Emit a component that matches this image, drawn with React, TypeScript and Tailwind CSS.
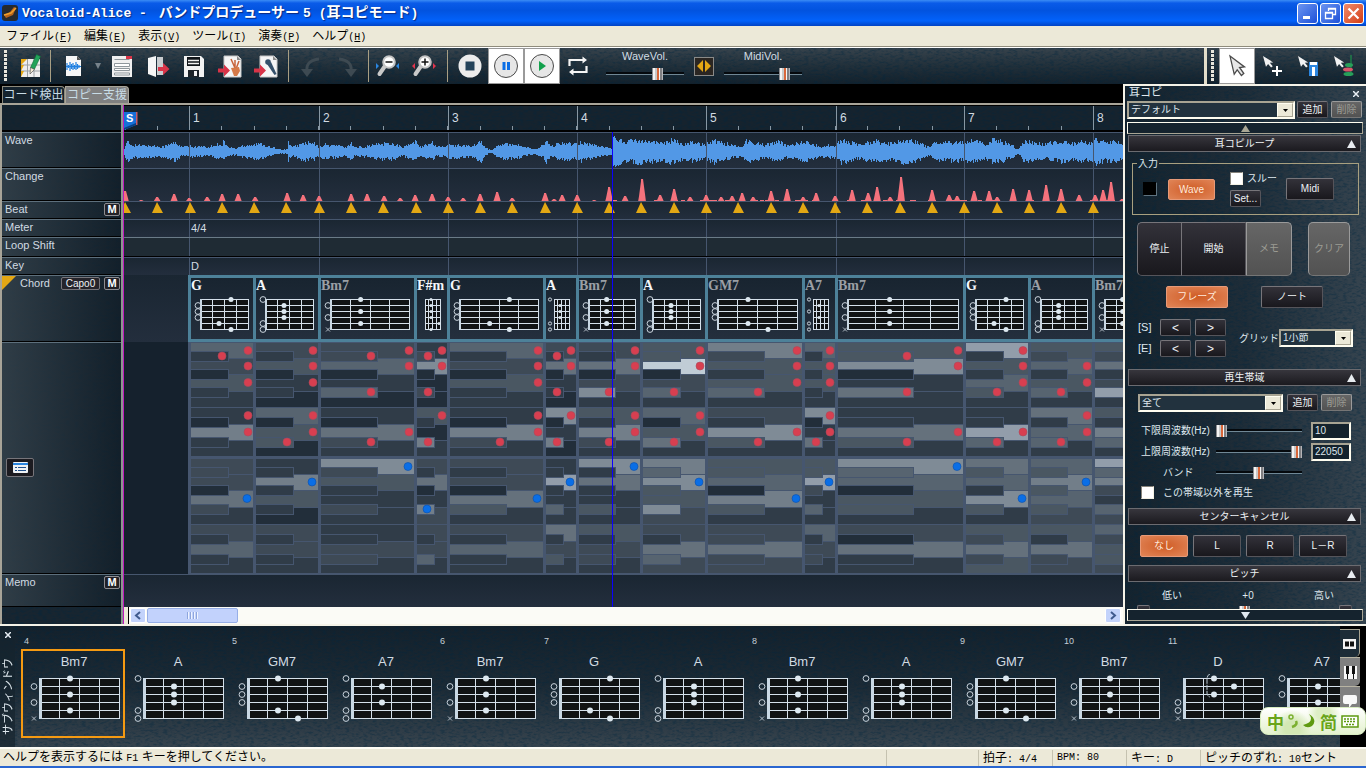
import React from "react";

const JP = "font-['Liberation_Sans','Noto_Sans_CJK_JP',sans-serif]";

/* ---------- shared data ---------- */

// one character per string, high to low: o = open, x = muted, digit = fret
const SHAPES: Record<string, string> = {
  G: "3ooo23",
  A: "o222oo",
  Bm7: "2o2o2x",
  "F#m": "222242",
  GM7: "2ooo23",
  A7: "o2o2oo",
  D: "232oox",
};

type Column = { name: string; w: number; strong?: boolean; mid: string; low: string; red: number[]; blue: number[] };
// levels run B, A#, A, G#, G, F#, F, E, D#, D, C#, C
const COLUMNS: Column[] = [
  { name: "G", w: 65, strong: true, mid: "412031110611", low: "222052121411", red: [0, 1, 2, 4, 7, 9], blue: [4] },
  { name: "A", w: 65, strong: true, mid: "213011040330", low: "116131021211", red: [0, 2, 4, 7, 9, 10], blue: [2] },
  { name: "Bm7", w: 96, mid: "224014010521", low: "723112111221", red: [0, 1, 2, 5, 9, 10], blue: [0] },
  { name: "F#m", w: 33, strong: true, mid: "127002031061", low: "215016221241", red: [0, 1, 2, 5, 7, 10], blue: [5] },
  { name: "G", w: 96, strong: true, mid: "412031110621", low: "212053121411", red: [0, 2, 4, 7, 9, 10], blue: [4] },
  { name: "A", w: 33, strong: true, mid: "215011070160", low: "118114151231", red: [0, 1, 2, 5, 7, 10], blue: [2] },
  { name: "Bm7", w: 64, mid: "215027131621", low: "715113131221", red: [0, 2, 5, 7, 9, 10], blue: [0] },
  { name: "A", w: 65, strong: true, mid: "339024140351", low: "647337221542", red: [0, 2, 5, 7, 9, 10], blue: [2] },
  { name: "GM7", w: 97, mid: "623134121731", low: "334063122522", red: [0, 2, 4, 5, 9, 10], blue: [4] },
  { name: "A7", w: 33, mid: "413131170151", low: "338214141221", red: [0, 2, 4, 7, 9, 10], blue: [2] },
  { name: "Bm7", w: 128, mid: "337015111531", low: "744033120511", red: [0, 1, 2, 5, 9, 10], blue: [0] },
  { name: "G", w: 65, strong: true, mid: "813143111841", low: "534173132523", red: [0, 2, 4, 5, 9, 10], blue: [4] },
  { name: "A", w: 64, mid: "324134151441", low: "436343231522", red: [2, 4, 5, 7, 9, 10], blue: [2] },
  { name: "Bm7", w: 64, mid: "325128131641", low: "846214242332", red: [], blue: [] },
];

const LEVELS = ["#222e3a", "#303c48", "#3e4a56", "#4a5762", "#576470", "#65717c", "#727e89", "#7f8b96", "#929daa", "#c0ccd6"];

const BARS = [65, 195, 324, 453, 582, 712, 840, 969];
const BEAT = 32.28;

const WAVE_ENV: [number, number][] = [
  [0, 4], [3, 10], [6, 7], [20, 6], [40, 5], [51, 10], [56, 5], [76, 5], [84, 4], [95, 8], [98, 7], [99, 11], [104, 4], [112, 3],
  [118, 6], [136, 8], [146, 4], [156, 2], [163, 2], [164, 10], [168, 4], [180, 9], [190, 8], [195, 4], [198, 7], [214, 6], [221, 4],
  [227, 9], [231, 4], [246, 6], [261, 9], [272, 7], [278, 4], [291, 10], [296, 5], [308, 9], [312, 5], [322, 5], [326, 7], [346, 5],
  [356, 11], [362, 3], [367, 1], [376, 7], [391, 8], [401, 4], [411, 2], [420, 7], [421, 12], [426, 5], [439, 9], [453, 7], [458, 10],
  [471, 6], [482, 4], [487, 4], [488, 13], [491, 14], [500, 10], [512, 12], [520, 12], [535, 9], [548, 12], [560, 8], [570, 10],
  [580, 7], [590, 12], [605, 7], [617, 5], [622, 11], [640, 7], [655, 10], [662, 6], [680, 10], [695, 5], [710, 7], [718, 12],
  [735, 7], [750, 11], [765, 8], [778, 12], [790, 11], [803, 5], [806, 4], [810, 9], [833, 10], [840, 9], [848, 12], [862, 7],
  [868, 12], [876, 11], [888, 6], [894, 2], [900, 11], [915, 8], [930, 9], [938, 11], [950, 8], [958, 11], [966, 8], [972, 13],
  [980, 10], [988, 11], [999, 7],
];

const PEAKS: [number, number][] = [
  [1, 11], [17, 2], [33, 5], [50, 8], [65, 4], [83, 5], [98, 8], [114, 8], [131, 5], [163, 9], [179, 7], [195, 6], [227, 8], [243, 8],
  [260, 6], [276, 4], [291, 7], [308, 8], [324, 5], [339, 4], [356, 8], [373, 10], [388, 4], [421, 9], [430, 3], [438, 7], [453, 7],
  [470, 2], [485, 15], [501, 6], [518, 23], [536, 7], [550, 13], [566, 5], [582, 7], [597, 5], [608, 6], [618, 9], [629, 5], [647, 11],
  [663, 13], [679, 5], [692, 9], [711, 6], [728, 12], [744, 9], [753, 15], [766, 5], [777, 25], [808, 12], [825, 7], [833, 6],
  [850, 11], [865, 11], [873, 5], [889, 13], [905, 12], [922, 17], [937, 13], [955, 7], [971, 7], [979, 12], [987, 20], [998, 3],
];

function noise(i: number) {
  const v = Math.sin(i * 127.1) * 43758.5453;
  return v - Math.floor(v);
}

function wavePath() {
  let up = "";
  let down = "";
  let seg = 0;
  for (let x = 0; x < 999; x++) {
    while (seg < WAVE_ENV.length - 2 && WAVE_ENV[seg + 1][0] <= x) seg++;
    const [x0, a0] = WAVE_ENV[seg];
    const [x1, a1] = WAVE_ENV[seg + 1];
    const a = a0 + ((a1 - a0) * (x - x0)) / (x1 - x0);
    const t = Math.round(a * (0.62 + 0.5 * noise(x)));
    const b = Math.round(a * (0.62 + 0.5 * noise(x + 2000)));
    up += `L${x} ${18 - t}L${x + 1} ${18 - t}`;
    down = `L${x + 1} ${19 + b}L${x} ${19 + b}` + down;
  }
  return `M0 18${up}${down}Z`;
}

function changePath() {
  let d = "";
  PEAKS.forEach(([x, h]) => {
    d += `M${x - 4} 33L${x - 3} ${33 - h * 0.25}L${x - 1} ${33 - h * 0.9}V${33 - h}H${x + 1}L${x + 3} ${33 - h * 0.35}L${x + 4} 33Z`;
  });
  for (let i = 0; i < 110; i++) {
    const x = Math.floor(noise(i + 77) * 995);
    const h = x > 480 ? 2 : 1;
    d += `M${x} 33V${33 - h}H${x + 4}V33Z`;
  }
  return d;
}

const WAVE_D = wavePath();
const CHANGE_D = changePath();

/* ---------- small parts ---------- */

function Grain({ id }: { id: string }) {
  return (
    <svg className="pointer-events-none absolute inset-0 h-full w-full opacity-35" aria-hidden="true">
      <filter id={id} x="0" y="0" width="100%" height="100%">
        <feTurbulence type="fractalNoise" baseFrequency="0.22 0.5" numOctaves="2" seed="4" />
        <feColorMatrix values="0 0 0 0 0  0 0 0 0 0.02  0 0 0 0 0.05  3.2 0 0 0 -1.4" />
      </filter>
      <rect width="100%" height="100%" filter={`url(#${id})`} />
    </svg>
  );
}

function Fretboard({ name, w, gap, nut = 2, frets = 4 }: { name: string; w: number; gap: number; nut?: number; frets?: number }) {
  const h = gap * 5;
  const small = w < 24;
  const r = small ? 1.5 : gap > 6 ? 3 : 2.5;
  const x0 = small ? 8 : gap > 6 ? 11 : 10;
  const ox = small ? 4 : gap > 6 ? 5 : 7;
  const y0 = 4;
  const marks = SHAPES[name].split("");
  return (
    <svg width={x0 + w + 3} height={h + 8} className="block shrink-0" aria-hidden="true">
      <rect x={x0} y={y0} width={w} height={h} fill="#111314" />
      {marks.map((_, i) => (
        <rect key={i} x={x0} y={y0 + i * gap} width={w} height="1" fill="#d5e0ea" />
      ))}
      {Array.from({ length: frets + 1 }, (_, i) => (
        <rect key={i} x={x0 + Math.round((i * w) / frets) - (i ? 1 : 0)} y={y0} width="1" height={h + 1} fill="#d5e0ea" />
      ))}
      {!small && <rect x={x0 - 1} y={y0} width={nut} height={h + 1} fill="#c9d8e4" />}
      {marks.map((m, i) => {
        const y = y0 + 0.5 + i * gap;
        if (m === "o") return <circle key={i} cx={ox} cy={y} r={small ? 1.6 : 2.9} fill="none" stroke="#c9d3dc" />;
        if (m === "x") {
          return <path key={i} d={`M${ox - 2} ${y - 2}l4 4m0 -4l-4 4`} stroke="#b4bec8" fill="none" />;
        }
        return <circle key={i} cx={x0 + ((Number(m) - 0.5) * w) / frets} cy={y} r={r} fill="#dde8f0" />;
      })}
      {name === "D" && <path d={`M${x0 + 26} ${y0 - 4}q-3 1 -3 5v14q0 3 3 4`} fill="none" stroke="#b9c6d0" strokeDasharray="5 1" />}
    </svg>
  );
}

const WHITE_KEYS = [0, 2, 4, 6, 7, 9, 11];
const BLACK_KEYS = [1, 3, 5, 8, 10];

function Octave({ w, levels, dots, color, tops, blacks, base, shift }: {
  w: number; levels: string; dots: number[]; color: string; tops: number[]; blacks: number[]; base: number; shift: number;
}) {
  const bw = Math.round(w * 0.61);
  return (
    <g transform={`translate(3 ${base})`}>
      {WHITE_KEYS.map((k, i) => (
        <g key={k}>
          <rect x="0" y={tops[i]} width={w} height={tops[i + 1] - tops[i]} fill={LEVELS[Number(levels[k])]} />
          {i > 0 && <rect x="0" y={tops[i]} width={w} height="1" fill="#46566f" />}
        </g>
      ))}
      {BLACK_KEYS.map((k, i) => (
        <rect key={k} x="-0.5" y={blacks[i] + 0.5} width={bw} height="10" fill={LEVELS[Number(levels[k])]} stroke="#46566f" />
      ))}
      {dots.map((k) => {
        const wi = WHITE_KEYS.indexOf(k);
        const cx = wi >= 0 ? w - shift : bw - 2 - shift;
        const cy = wi >= 0 ? (tops[wi] + tops[wi + 1]) / 2 : blacks[BLACK_KEYS.indexOf(k)] + 5;
        return <circle key={k} cx={cx} cy={cy} r="4" fill={color} stroke={color === "#d83f50" ? "#a94a5c" : "#0d4fa8"} strokeWidth="0.6" />;
      })}
    </g>
  );
}

function PianoColumn({ c }: { c: Column }) {
  const w = c.w - 3;
  return (
    <svg width={c.w} height="232" className="block shrink-0" aria-hidden="true">
      <rect width={c.w} height="232" fill="#46566f" />
      <Octave w={w} levels={c.mid} dots={c.red} color="#d83f50" base={1} shift={5} tops={[0, 15, 31, 48, 64, 81, 97, 113]} blacks={[8, 26, 44, 74, 94]} />
      <Octave w={w} levels={c.low} dots={c.blue} color="#0a6ee6" base={117} shift={6} tops={[0, 15, 31, 48, 65, 82, 98, 114]} blacks={[8, 26, 45, 75, 95]} />
    </svg>
  );
}

type BtnProps = { children?: React.ReactNode; className?: string; tone?: "dark" | "hot" | "off"; label?: string };
function Btn({ children, className = "", tone = "dark", label }: BtnProps) {
  const tones = {
    dark: "border-[#77757a] border-b-[#55545a] border-r-[#55545a] bg-linear-to-b from-[#33323a] to-[#19181d] text-[#eef2f5]",
    hot: "border-[#e79a78] bg-radial from-[#cf5b22] to-[#e08557] text-[#ffeadd]",
    off: "border-[#9a9a9a] border-b-[#757575] bg-linear-to-b from-[#666666] to-[#525252] text-[#9c9c94]",
  };
  return (
    <button type="button" aria-label={label} className={`flex shrink-0 items-center justify-center rounded-[2px] border text-[10px] leading-none ${tones[tone]} ${className}`}>
      {children}
    </button>
  );
}

function Slider({ label, value, id, className = "" }: { label: string; value: number; id?: string; className?: string }) {
  return (
    <input
      id={id}
      type="range"
      aria-label={label}
      defaultValue={value}
      className={`block h-3 shrink-0 appearance-none bg-transparent [&::-webkit-slider-runnable-track]:h-[3px] [&::-webkit-slider-runnable-track]:border-t-2 [&::-webkit-slider-runnable-track]:border-t-[#05090d] [&::-webkit-slider-runnable-track]:bg-[#6f8795] [&::-webkit-slider-thumb]:-mt-[6px] [&::-webkit-slider-thumb]:h-3 [&::-webkit-slider-thumb]:w-[11px] [&::-webkit-slider-thumb]:appearance-none [&::-webkit-slider-thumb]:bg-[linear-gradient(90deg,#8d8d90_0_1px,#f4f4f4_1px_3px,#c9c9c9_3px_5px,#d9673a_5px_7px,#f5f5f5_7px_8px,#7f7f82_8px_10px,#b5b5b8_10px)] ${className}`}
    />
  );
}

function DropDown({ label, value, className = "" }: { label: string; value: string; className?: string }) {
  return (
    <div className={`flex h-[18px] shrink-0 border-2 border-[#fffdf0] border-t-[#a8a493] border-l-[#a8a493] bg-[#22323e] ${className}`}>
      <select aria-label={label} className="min-w-0 flex-1 appearance-none bg-transparent pl-[2px] text-[10px] leading-none text-[#dfe8ee] outline-none">
        <option>{value}</option>
      </select>
      <span className="pointer-events-none flex w-4 items-center justify-center border border-[#fffdf0] border-r-[#a8a493] border-b-[#a8a493] bg-[#ece9d8]">
        <svg width="5" height="3" aria-hidden="true"><path d="M0 0h5L2.5 3z" fill="#000" /></svg>
      </span>
    </div>
  );
}

function SectionHead({ title }: { title: string }) {
  return (
    <button type="button" className="relative mr-[5px] ml-[3px] flex h-[17px] shrink-0 items-center justify-center border border-[#6b6b70] bg-linear-to-b from-[#37363d] to-[#1b1a1f] text-[10px] leading-none text-[#eef2f5]">
      {title}
      <svg width="9" height="8" className="absolute right-[4px]" aria-hidden="true"><path d="M4.5 0L9 8H0z" fill="#e8ecf0" /></svg>
    </button>
  );
}

function CheckBox({ id }: { id: string }) {
  return <input id={id} type="checkbox" className="h-[13px] w-[13px] shrink-0 appearance-none border border-t-[#85827a] border-l-[#85827a] border-[#f4f1e4] bg-white" />;
}

/* ---------- toolbar ---------- */

function Tool({ label, on, children, className = "w-9" }: { label: string; on?: boolean; children: React.ReactNode; className?: string }) {
  return (
    <button type="button" aria-label={label} className={`flex h-9 shrink-0 items-center justify-center ${on ? "border border-[#9a9a9a] bg-white" : ""} ${className}`}>
      {children}
    </button>
  );
}

function Rule() {
  return <span className="mx-px h-8 w-px shrink-0 bg-[#a89f84]" />;
}

function Grip({ className = "" }: { className?: string }) {
  return <span className={`ml-1 h-8 w-[3px] shrink-0 bg-[repeating-linear-gradient(180deg,#e8e6dc_0_3px,#1c2832_3px_4px)] ${className}`} />;
}

const svgBase = { width: 26, height: 26, viewBox: "0 0 26 26", "aria-hidden": true } as const;

function Magnifier({ plus }: { plus?: boolean }) {
  const c = plus ? "#e0344c" : "#2b86e0";
  return (
    <svg width="26" height="26" viewBox="0 0 26 26" aria-hidden="true">
      <path d="M10 13L4.500 21" stroke="#c9c9c9" strokeWidth="4" strokeLinecap="round" />
      <circle cx="14" cy="9" r="5.800" fill="#fff" stroke="#c4c4c4" strokeWidth="2" />
      <path d={plus ? "M10.500 9h7M14 5.500v7" : "M10.500 9h7"} stroke="#111" strokeWidth="1.500" />
      {plus ? <path d="M4 10v6l-3-3zM22 10v6l3-3z" fill={c} /> : <path d="M1 10v6l3-3zM24 10v6l-3-3z" fill={c} />}
    </svg>
  );
}

function PageArrow({ children }: { children: React.ReactNode }) {
  return (
    <svg {...svgBase}>
      <path d="M7 3h14l3 3v18H7z" fill="#f5f5f5" stroke="#c8c8c8" />
      <path d="M20 3l4 4h-4z" fill="#8b8b8b" />
      {children}
      <path d="M1 15.500h6v-4l6 6-6 6v-4H1z" fill="#d83448" />
    </svg>
  );
}

const CURSOR = "M0 0L3.500 12.500L6 9.500L9.500 13.500L11.500 12L8 8L12 7.500Z";

function Toolbar() {
  return (
    <div className="relative flex h-9 shrink-0 bg-linear-to-b from-[#37434c] via-[#22303a] to-[#13212c]">
      <Grain id="grain-bar" />
      <div className="relative flex min-w-0 flex-1 items-center overflow-hidden">
        <Grip className="mr-[6px]" />
        <Tool label="新規">
          <svg {...svgBase}>
            <rect x="3" y="6" width="19" height="18" fill="#eeeeee" />
            <path d="M3 12h19M3 18h19M9.500 6v18M16 6v18" stroke="#9aa0a4" />
            <path d="M3 6h6l-6 6zM3 12h3l-3 6zM3 18h3l-3 6z" fill="#e4a714" />
            <path d="M12.500 14.500L18.500 1.500l4 2-6 12.500z" fill="#22a35a" stroke="#0d6b38" strokeWidth="0.600" />
            <path d="M12.500 14.500l-.5 6.500 4.500-4.500z" fill="#f2ead8" stroke="#444" strokeWidth="0.600" />
          </svg>
        </Tool>
        <Rule />
        <Tool label="Wave を開く" className="ml-1 w-9">
          <svg {...svgBase}>
            <path d="M5 3h11l4 4v16H5z" fill="#f7f7f7" />
            <path d="M16 3l4 4h-4z" fill="#555" />
            <path d="M6 10v7M7.500 12v3M9 9v9M10.500 11v5M12 10v7M13.500 12v4M15 9v8M16.500 11v5M18 12v3M5 13.500h15" stroke="#1f7fe0" strokeWidth="1.200" />
          </svg>
        </Tool>
        <button type="button" aria-label="開くメニュー" className="flex h-9 w-3 shrink-0 items-center justify-center">
          <svg width="6" height="6" aria-hidden="true"><path d="M0 0h6L3 6z" fill="#77828a" /></svg>
        </button>
        <Tool label="プロパティ">
          <svg {...svgBase}>
            <rect x="3" y="3" width="20" height="21" fill="#f0f0f0" />
            <rect x="17" y="3" width="6" height="3" fill="#d83448" />
            <path d="M5.500 6.500h15M5.500 10.500h15v3h-15zM5.500 15.500h15v2h-15zM5.500 20h15v2h-15z" stroke="#8f979c" fill="#fff" />
          </svg>
        </Tool>
        <Tool label="書き出し">
          <svg {...svgBase}>
            <path d="M3 5l8-2v21l-8-3z" fill="#f6f6f6" />
            <path d="M12 4h6v18h-6z" fill="#c9cccf" />
            <path d="M13 14h5v-4l6.500 6-6.500 6v-4h-5z" fill="#d83448" />
          </svg>
        </Tool>
        <Tool label="保存">
          <svg {...svgBase}>
            <path d="M3 3h17l3 3v18H3z" fill="#f2f2f2" />
            <path d="M6 4h13v9H6z" fill="#101418" />
            <path d="M7 7.500h11M7 10.500h11" stroke="#f2f2f2" strokeWidth="1.500" />
            <path d="M7 17h11v7H7z" fill="#1c2228" />
            <rect x="13" y="18" width="3" height="5" fill="#f2f2f2" />
          </svg>
        </Tool>
        <Tool label="ギター書き出し">
          <PageArrow>
            <path d="M14 6l4 9M18 7v8M22 8l-3 8" stroke="#c8643a" strokeWidth="1.500" fill="none" />
            <path d="M14 15l8-1 1 4-3 5h-3z" fill="#d67a48" />
          </PageArrow>
        </Tool>
        <Tool label="ボーカル書き出し">
          <PageArrow>
            <circle cx="15" cy="9" r="2.800" fill="#34506a" />
            <path d="M14 11l4-2 5.500 12-2 1z" fill="#34506a" />
          </PageArrow>
        </Tool>
        <span className="ml-[3px] flex"><Rule /></span>
        <Tool label="元に戻す" className="ml-[3px] w-9">
          <svg {...svgBase}><path d="M9 18C8 11 12 7 21 6" fill="none" stroke="#3e4a52" strokeWidth="3" /><path d="M3 16h12l-6 8z" fill="#3e4a52" /></svg>
        </Tool>
        <Tool label="やり直し">
          <svg {...svgBase}><path d="M17 18C18 11 14 7 5 6" fill="none" stroke="#3e4a52" strokeWidth="3" /><path d="M11 16h12l-6 8z" fill="#3e4a52" /></svg>
        </Tool>
        <span className="ml-[2px] flex"><Rule /></span>
        <Tool label="縮小"><Magnifier /></Tool>
        <Tool label="拡大"><Magnifier plus /></Tool>
        <span className="ml-1 flex"><Rule /></span>
        <Tool label="停止" className="ml-[3px] w-9">
          <svg {...svgBase}><circle cx="13" cy="13" r="11.500" fill="#ececec" /><rect x="8.500" y="8.500" width="9" height="9" fill="#24435a" /></svg>
        </Tool>
        <Tool label="一時停止" on>
          <svg {...svgBase}><circle cx="13" cy="13" r="11.500" fill="#e6e6e6" stroke="#4a4a4a" /><path d="M9.500 9h3v8h-3zM14 9h3v8h-3z" fill="#0a6ee6" /></svg>
        </Tool>
        <Tool label="再生" on>
          <svg {...svgBase}><circle cx="13" cy="13" r="11.500" fill="#e6e6e6" stroke="#4a4a4a" /><path d="M10 8l7 5-7 5z" fill="#12a04c" /></svg>
        </Tool>
        <Tool label="リピート">
          <svg width="22" height="22" viewBox="3 2 20 22" aria-hidden="true">
            <path d="M4.500 13V7H18M21.500 13v6H8" fill="none" stroke="#f4f4f4" strokeWidth="2.200" />
            <path d="M17.500 3.500l4.500 3.500-4.500 3.500zM8.500 15.500l-4.500 3.500 4.500 3.500z" fill="#f4f4f4" />
          </svg>
        </Tool>
        <div className="ml-[9px] flex h-9 w-20 shrink-0 flex-col items-center pt-[2px]">
          <label htmlFor="wave-vol" className="text-[11px] leading-[13px] text-[#d2dbe2]">WaveVol.</label>
          <Slider id="wave-vol" label="WaveVol." value={68} className="mt-1 w-[78px]" />
        </div>
        <button type="button" aria-label="バランス" className="mr-[9px] ml-[9px] flex h-[19px] w-5 shrink-0 items-center justify-center border border-[#8a8a88] bg-[#2b2622]">
          <svg width="16" height="12" aria-hidden="true"><path d="M7 0v12L1 6zM9 0v12l6-6z" fill="#e4a714" /></svg>
        </button>
        <div className="flex h-9 w-20 shrink-0 flex-col items-center pt-[2px]">
          <label htmlFor="midi-vol" className="text-[11px] leading-[13px] text-[#d2dbe2]">MidiVol.</label>
          <Slider id="midi-vol" label="MidiVol." value={82} className="mt-1 w-[78px]" />
        </div>
      </div>
      <span className="relative w-[3px] shrink-0 bg-[#e2ddca]" />
      <div className="relative flex w-[159px] shrink-0 items-center">
        <Grip className="mr-1" />
        <Tool label="選択" on className="ml-px w-9">
          <svg {...svgBase}><path d={CURSOR} transform="translate(6 3) scale(1.2 1.45)" fill="#e8e8e8" stroke="#4a4a4a" /></svg>
        </Tool>
        <Tool label="追加ツール">
          <svg {...svgBase}><path d={CURSOR} transform="translate(3 3) scale(.85)" fill="#f2f2f2" /><path d="M12 18h10M17 13v10" stroke="#fff" strokeWidth="2" /></svg>
        </Tool>
        <Tool label="削除ツール">
          <svg {...svgBase}><path d={CURSOR} transform="translate(2 3) scale(.85)" fill="#f2f2f2" /><path d="M13 9h9v14h-9z" fill="#2b86e0" /><path d="M14 9h7v3h-7zM16 14h3v9h-3z" fill="#fff" /></svg>
        </Tool>
        <Tool label="コードツール">
          <svg {...svgBase}><path d={CURSOR} transform="translate(2 3) scale(.85)" fill="#f2f2f2" /><path d="M19 2v20" stroke="#18a04c" /><ellipse cx="17" cy="12" rx="4" ry="2" fill="#27a05a" /><ellipse cx="16" cy="16.500" rx="5" ry="2" fill="#d8566a" /><ellipse cx="16.500" cy="21" rx="5" ry="2" fill="#27a05a" /></svg>
        </Tool>
      </div>
    </div>
  );
}

/* ---------- timeline ---------- */

function MBtn() {
  return (
    <button type="button" className="flex h-[13px] w-4 items-center justify-center rounded-[2px] border border-[#8d8d92] bg-[#222126] text-[11px] leading-none font-bold text-white">M</button>
  );
}

function TrackLabel({ name, h, mute, capo }: { name: string; h: string; mute?: boolean; capo?: boolean }) {
  return (
    <div className={`relative flex shrink-0 items-start justify-between border-t border-[#5d6f7c] border-b border-b-black bg-linear-to-r from-[#36434c]/80 to-[#101c26]/60 pr-px pl-[3px] text-[11px] leading-[14px] text-[#d2dbe2] ${h}`}>
      {capo && (
        <svg width="14" height="14" className="absolute top-0 left-0" aria-hidden="true"><path d="M0 0h14L0 14z" fill="#e4a714" /></svg>
      )}
      <span className={capo ? "pl-[15px]" : ""}>{name}</span>
      <span className="flex gap-1 pt-px">
        {capo && <button type="button" className="flex h-[13px] w-[39px] items-center justify-center rounded-[2px] border border-[#77757a] bg-[#25242a] text-[10px] leading-none text-[#eef2f5]">Capo0</button>}
        {mute && <MBtn />}
      </span>
    </div>
  );
}

function TrackLabels() {
  return (
    <div className="relative flex w-[123px] shrink-0 flex-col border-r-2 border-l-2 border-r-[#8d958f] border-l-[#a8a498] bg-[#182530]">
      <Grain id="grain-left" />
      <div className="relative h-[27px] shrink-0 border-b-2 border-black bg-[#14222c]/50" />
      <TrackLabel name="Wave" h="h-9" />
      <TrackLabel name="Change" h="h-[33px]" />
      <TrackLabel name="Beat" h="h-[18px]" mute />
      <TrackLabel name="Meter" h="h-[18px]" />
      <TrackLabel name="Loop Shift" h="h-5" />
      <TrackLabel name="Key" h="h-[18px]" />
      <TrackLabel name="Chord" h="h-[67px]" mute capo />
      <div className="relative flex h-[232px] shrink-0 items-center border-t border-b border-[#5d6f7c] border-b-black bg-linear-to-r from-[#36434c]/80 to-[#101c26]/60">
        <button type="button" aria-label="リスト表示" className="mt-[19px] ml-1 flex h-[19px] w-7 items-center justify-center rounded-[2px] border border-[#77757a] bg-[#1c1b20]">
          <svg width="15" height="11" aria-hidden="true"><rect width="15" height="11" rx="1" fill="#eef2f5" /><path d="M0 2h15" stroke="#2b86e0" strokeWidth="2" /><path d="M2 5.500h2m1 0h8M2 8.500h2m1 0h8" stroke="#1f4f8a" /></svg>
        </button>
      </div>
      <TrackLabel name="Memo" h="h-[33px]" mute />
      <div className="relative h-[17px] shrink-0" />
    </div>
  );
}

function Ruler() {
  return (
    <div className="relative h-[27px] shrink-0 border-t border-b-2 border-black bg-[#16232e]">
      <Grain id="grain-ruler" />
      <svg className="absolute inset-0 h-full w-full" aria-hidden="true">
        {Array.from({ length: 31 }, (_, i) => (
          <rect key={i} x={Math.round(0.5 + i * BEAT)} y="20" width="1" height="4" fill="#8797a3" />
        ))}
        {BARS.map((x) => <rect key={x} x={x} y="0" width="1" height="24" fill="#8797a3" />)}
        <path d="M0 6h12v13L0 24z" fill="#1670d8" /><path d="M0 24v-2l12-5v2z" fill="#0b3f80" /><rect x="12" y="6" width="1.500" height="13" fill="#c55a68" />
      </svg>
      <b className="absolute top-[6px] left-[2px] text-[11px] leading-[13px] text-white">S</b>
      {BARS.map((x, i) => (
        <span key={x} className="absolute top-[5px] text-[12px] leading-[14px] text-[#d2dbe2]" style={{ left: x + 4 }}>{i + 1}</span>
      ))}
    </div>
  );
}

const LANE = "relative shrink-0 border-t border-[#46566e] bg-linear-to-b from-[#1a2632] to-[#232e3d]";

function BarLines() {
  return (
    <svg className="pointer-events-none absolute inset-0 h-full w-full" aria-hidden="true">
      {BARS.map((x) => <rect key={x} x={x} y="0" width="1" height="100%" fill="#46566e" />)}
    </svg>
  );
}

function Timeline() {
  return (
    <div className="relative flex min-w-0 flex-1 flex-col overflow-hidden border-l border-[#c018c0] bg-[#16222e]">
      <Ruler />
      <div className={`h-9 ${LANE}`}>
        <svg width="999" height="36" className="block" aria-hidden="true"><path d={WAVE_D} fill="#5298e6" /></svg>
        <BarLines />
      </div>
      <div className={`h-[33px] ${LANE}`}>
        <BarLines />
        <svg width="999" height="33" className="absolute top-0 left-0" aria-hidden="true"><path d={CHANGE_D} fill="#f4727c" /></svg>
      </div>
      <div className={`h-[18px] ${LANE}`}>
        <BarLines />
        <svg width="999" height="18" className="absolute top-0 left-0" aria-hidden="true">
          {Array.from({ length: 31 }, (_, i) => {
            const x = Math.round(1 + i * BEAT);
            return <path key={i} d={`M${x} 0L${x + 6} 11H${x - 5}Z`} fill="#e2a714" />;
          })}
        </svg>
      </div>
      <div className={`h-[18px] pl-[67px] text-[11px] leading-4 text-[#d2dbe2] ${LANE}`}><BarLines />4/4</div>
      <div className="relative h-5 shrink-0 border-t border-b border-[#6a7b88] border-b-black bg-[#1f2b34]"><BarLines /></div>
      <div className={`h-[18px] pl-[67px] text-[11px] leading-4 text-[#d2dbe2] ${LANE}`}><BarLines />D</div>
      <div className="flex h-[67px] shrink-0 bg-linear-to-b from-[#1a2632] to-[#232e3d] pl-16">
        {COLUMNS.map((c, i) => (
          <div key={i} className="flex shrink-0 flex-col overflow-hidden border-y-[3px] border-l-[3px] border-[#4d8199] bg-linear-to-b from-[#182430] to-[#242f3d]" style={{ width: c.w }}>
            <span className={`h-[17px] font-['Liberation_Serif',serif] text-[14px] leading-[15px] font-bold ${c.strong ? "text-[#f4f7fa]" : "text-[#9a9fa5]"}`}>{c.name}</span>
            <Fretboard name={c.name} w={c.w - 17} gap={6} />
          </div>
        ))}
      </div>
      <div className="flex h-[232px] shrink-0 bg-[#15212d] pl-16">
        {COLUMNS.map((c, i) => <PianoColumn key={i} c={c} />)}
      </div>
      <div className={`h-[33px] ${LANE}`} />
      <div className="flex h-[17px] shrink-0 items-center bg-[#fbfbf6]">
        <span className="mr-px h-[17px] w-[5px] border-r border-black bg-[#ece9d8]" />
        <button type="button" aria-label="左へ" className="flex h-[15px] w-4 items-center justify-center rounded-[2px] border border-white bg-[#c3d3fb]">
          <svg width="8" height="9" aria-hidden="true"><path d="M6 1L2 4.500L6 8" stroke="#3f5a8e" strokeWidth="2" fill="none" /></svg>
        </button>
        <span className="ml-px flex h-[15px] w-[91px] items-center justify-center gap-px rounded-[2px] border border-[#96aee6] bg-[#c2d2fc]">
          {[0, 1, 2, 3].map((i) => <i key={i} className="h-[7px] w-[2px] border-l border-[#8ea6dd] bg-[#eef3ff]" />)}
        </span>
        <button type="button" aria-label="右へ" className="mr-[2px] ml-auto flex h-[15px] w-4 items-center justify-center rounded-[2px] border border-white bg-[#c3d3fb]">
          <svg width="8" height="9" aria-hidden="true"><path d="M2 1l4 3.500L2 8" stroke="#3f5a8e" strokeWidth="2" fill="none" /></svg>
        </button>
      </div>
      <i className="absolute top-[27px] bottom-[17px] left-[488px] w-px bg-[#0a00ff]" />
    </div>
  );
}

/* ---------- right panel ---------- */

function ScrollBar({ down }: { down?: boolean }) {
  return (
    <button type="button" aria-label={down ? "下へ" : "上へ"} className="relative mr-[3px] ml-[2px] flex h-3 shrink-0 items-center justify-center border border-[#fffdf0] border-r-[#a8a493] border-b-[#a8a493] bg-[#15232e]">
      <svg width="9" height="7" aria-hidden="true"><path d={down ? "M0 0h9L4.500 7z" : "M4.500 0L9 7H0z"} fill={down ? "#dfe8f0" : "#a9a694"} /></svg>
    </button>
  );
}

function FreqRow({ label, value, text }: { label: string; value: number; text?: string }) {
  const id = "freq-" + value;
  return (
    <div className="flex h-[21px] shrink-0 items-center pl-4">
      <label htmlFor={id} className={`w-[71px] text-[10px] whitespace-nowrap ${text ? "" : "pl-[22px]"}`}>{label}</label>
      <Slider label={label} value={value} id={text ? undefined : id} className="ml-1 w-[86px]" />
      {text && <input id={id} defaultValue={text} className="ml-[9px] h-[18px] w-10 border-2 border-[#fffdf0] border-t-[#a8a493] border-l-[#a8a493] bg-[#14222c] pl-[2px] text-[10px] leading-none text-[#dfe8ee]" />}
    </div>
  );
}

function SidePanel() {
  return (
    <aside className="relative flex w-[243px] shrink-0 flex-col overflow-hidden border-t-2 border-l-2 border-b-2 border-[#f5f3e8] bg-linear-to-r from-[#15232e] via-[#1f2d38] to-[#36444f] text-[10px] text-[#dfe8ee]">
      <Grain id="grain-side" />
      <div className="relative flex h-[538px] flex-col">
        <div className="flex h-[15px] shrink-0 items-start justify-between pr-[7px] pl-1">
          <h2 className="text-[11px] leading-3">耳コピ</h2>
          <button type="button" aria-label="閉じる" className="mt-[5px]">
            <svg width="6" height="6" className="block" aria-hidden="true"><path d="M0 0l6 6M6 0L0 6" stroke="#e8eef4" strokeWidth="1.500" /></svg>
          </button>
        </div>
        <div className="flex shrink-0 pl-[2px]">
          <DropDown label="プリセット" value="デフォルト" className="w-[168px]" />
          <Btn className="ml-[2px] h-[17px] w-[31px]">追加</Btn>
          <Btn tone="off" className="ml-[3px] h-[17px] w-[31px]">削除</Btn>
        </div>
        <div className="mt-[3px] flex shrink-0 flex-col"><ScrollBar /></div>
        <div className="mt-px flex min-h-0 flex-1 flex-col overflow-hidden">
          <SectionHead title="耳コピループ" />
          <fieldset className="mt-1 ml-[7px] flex h-[59px] w-[227px] shrink-0 border border-[#a8a080] px-[10px]">
            <legend className="-ml-[6px] px-px text-[10px] leading-[15px]">入力</legend>
            <div className="flex pt-1">
              <span className="mt-[7px] h-[14px] w-[14px] border border-black border-r-[#5f7380] border-b-[#5f7380] bg-black" />
              <Btn tone="hot" className="mt-1 ml-[11px] h-[21px] w-[47px]">Wave</Btn>
              <div className="-mt-1 ml-[15px] w-14">
                <div className="flex items-center gap-1 leading-[15px]"><CheckBox id="through" /><label htmlFor="through">スルー</label></div>
                <Btn className="mt-1 h-[17px] w-[31px]">Set...</Btn>
              </div>
              <Btn className="mt-[3px] h-[22px] w-12">Midi</Btn>
            </div>
          </fieldset>
          <div className="mt-[7px] flex h-[54px] shrink-0 pl-3">
            <Btn className="w-11 rounded-l-[5px] rounded-r-none border-r-0">停止</Btn>
            <Btn className="w-[65px] rounded-none">開始</Btn>
            <Btn tone="off" className="w-[46px] rounded-l-none rounded-r-[5px]">メモ</Btn>
            <Btn tone="off" className="ml-4 w-[42px] rounded-[5px]">クリア</Btn>
          </div>
          <div className="mt-[10px] flex h-[22px] shrink-0 pl-[41px]">
            <Btn tone="hot" className="h-[22px] w-[62px]">フレーズ</Btn>
            <Btn className="ml-[33px] h-[22px] w-[62px]">ノート</Btn>
          </div>
          <div className="mt-[11px] flex shrink-0 items-center pl-[13px]">
            <div className="flex flex-col gap-1">
              {["[S]", "[E]"].map((t) => (
                <div key={t} className="flex h-[17px] items-center">
                  <span className="w-[22px] text-[11px]">{t}</span>
                  <Btn label={t + " 戻る"} className="h-[17px] w-[31px] text-[12px]">&lt;</Btn>
                  <Btn label={t + " 進む"} className="ml-1 h-[17px] w-[31px] text-[12px]">&gt;</Btn>
                </div>
              ))}
            </div>
            <span className="ml-[13px] w-10 whitespace-nowrap">グリッド</span>
            <DropDown label="グリッド" value="1小節" className="w-[74px]" />
          </div>
          <div className="h-3 shrink-0" />
          <SectionHead title="再生帯域" />
          <div className="mt-2 flex h-[18px] shrink-0 pl-[13px]">
            <DropDown label="再生帯域" value="全て" className="w-[145px]" />
            <Btn className="ml-1 h-[17px] w-[31px]">追加</Btn>
            <Btn tone="off" className="ml-[3px] h-[17px] w-[31px]">削除</Btn>
          </div>
          <div className="h-2 shrink-0" />
          <FreqRow label="下限周波数(Hz)" value={0} text="10" />
          <FreqRow label="上限周波数(Hz)" value={100} text="22050" />
          <FreqRow label="バンド" value={49} />
          <div className="flex h-[18px] shrink-0 items-center gap-[9px] pl-4"><CheckBox id="outside" /><label htmlFor="outside">この帯域以外を再生</label></div>
          <div className="h-[7px] shrink-0" />
          <SectionHead title="センターキャンセル" />
          <div className="mt-[10px] flex h-[22px] shrink-0 gap-[5px] pl-[15px]">
            <Btn tone="hot" className="w-12">なし</Btn>
            <Btn className="w-12">L</Btn>
            <Btn className="w-12">R</Btn>
            <Btn className="w-12">L－R</Btn>
          </div>
          <div className="h-2 shrink-0" />
          <SectionHead title="ピッチ" />
          <div className="mt-[7px] flex h-[13px] shrink-0 justify-between pr-8 pl-[37px] leading-[13px]"><span>低い</span><span>+0</span><span>高い</span></div>
          <div className="mt-[3px] flex shrink-0 items-start justify-between pr-[14px] pl-3">
            <Btn label="低く" className="h-4 w-[13px]" />
            <Slider label="ピッチ" value={50} className="w-20" />
            <Btn label="高く" className="h-4 w-[13px]" />
          </div>
        </div>
        <ScrollBar down />
        <div className="h-[3px] shrink-0" />
      </div>
    </aside>
  );
}

/* ---------- sub window ---------- */

const SUB: [string, string][] = [
  ["Bm7", "4"], ["A", ""], ["GM7", "5"], ["A7", ""], ["Bm7", "6"], ["G", "7"], ["A", ""],
  ["Bm7", "8"], ["A", ""], ["GM7", "9"], ["Bm7", "10"], ["D", "11"], ["A7", ""],
];

function SubWindow() {
  return (
    <div className="relative flex h-[121px] shrink-0 overflow-hidden bg-linear-to-b from-[#14212c] via-[#1c2a35] to-[#37444e]">
      <Grain id="grain-sub" />
      <div className="relative flex w-[15px] shrink-0 flex-col items-center bg-[#15232e]/70 pt-[6px]">
        <button type="button" aria-label="閉じる"><svg width="6" height="6" className="block" aria-hidden="true"><path d="M0 0l6 6M6 0L0 6" stroke="#e8eef4" strokeWidth="1.500" /></svg></button>
        <span className="mt-5 rotate-180 text-[11px] leading-[14px] whitespace-nowrap text-[#dfe8ee] [text-orientation:sideways] [writing-mode:vertical-rl]">サブウィンドウ</span>
      </div>
      <div className="relative flex min-w-0 flex-1 overflow-hidden pl-[6px]">
        {SUB.map(([name, n], i) => (
          <div key={i} className="w-[104px] shrink-0">
            <div className="h-[23px] pt-[9px] pl-[3px] text-[9px] leading-[13px] text-[#c4ced6]">{n}</div>
            <div className={`flex h-[89px] flex-col border-2 ${i === 0 ? "border-[#f59a12]" : "border-transparent"}`}>
              <div className="h-[23px] pt-[3px] pl-[2px] text-center text-[13px] leading-[15px] text-[#d2dbe2]">{name}</div>
              <div className="pl-[6px]"><Fretboard name={name} w={80} gap={8} nut={3} /></div>
            </div>
          </div>
        ))}
      </div>
      <div className="relative flex w-[26px] shrink-0 flex-col bg-black pt-[3px] pr-[6px] pb-px">
        <button type="button" aria-label="コード" className="flex h-7 items-center justify-center rounded-br-[5px] border-t border-r border-[#a8a493] bg-[#1d2c37]">
          <svg width="13" height="10" aria-hidden="true"><path d="M0 0h13v10H0z" fill="#f4f4f4" /><path d="M2 2.500h4v5H2zM7 2.500h4v5H7z" fill="#111" /></svg>
        </button>
        <button type="button" aria-label="鍵盤" className="flex h-[29px] items-center justify-center rounded-br-[5px] border-t border-[#b8b4a3] bg-[#808080]">
          <svg width="13" height="13" aria-hidden="true"><path d="M0 0h13v13H0z" fill="#f8f8f8" /><path d="M2 0h3v8H2zM8 0h3v8H8zM3 8h1v5H3zM9 8h1v5H9z" fill="#111" /></svg>
        </button>
        <button type="button" aria-label="メモ" className="flex h-[29px] items-center justify-center rounded-br-[5px] border-t border-[#b8b4a3] bg-[#808080]">
          <svg width="14" height="13" aria-hidden="true"><path d="M2 0h10q2 0 2 2v5q0 2-2 2H9l-3 4V9H2Q0 9 0 7V2q0-2 2-2z" fill="#f8f8f8" /></svg>
        </button>
      </div>
    </div>
  );
}

function ImeBar() {
  return (
    <div className="absolute right-0 bottom-[33px] flex h-[28px] w-[106px] items-center justify-center gap-1 rounded-[8px] border border-[#d8ecc0] bg-[radial-gradient(circle_at_30%_80%,#d3e8b4_0_10%,transparent_25%),radial-gradient(circle_at_60%_20%,#ddeec4_0_10%,transparent_25%),linear-gradient(#ffffff,#e4f2ce)] font-['Noto_Sans_CJK_SC',sans-serif] text-[17px] leading-none font-bold text-[#6aa51a]">
      <span>中</span>
      <svg width="10" height="16" aria-hidden="true"><circle cx="3" cy="4" r="2" fill="none" stroke="#7cb030" strokeWidth="1.500" /><path d="M8 8q2 4-4 6" fill="none" stroke="#7cb030" strokeWidth="2.500" /></svg>
      <svg width="14" height="16" aria-hidden="true"><path d="M7 1q6 8-6 11q4 4 9 1q6-6-3-12z" fill="#5f9a10" /></svg>
      <span>简</span>
      <svg width="18" height="13" aria-hidden="true"><rect x="1" y="1" width="16" height="11" fill="#fff" stroke="#5f9a10" strokeWidth="1.500" /><path d="M3 4h12M3 6.500h12M5 9.500h8" stroke="#5f9a10" strokeWidth="1.500" strokeDasharray="2 1" /></svg>
    </div>
  );
}

/* ---------- page ---------- */

const MENUS: [string, string][] = [["ファイル", "F"], ["編集", "E"], ["表示", "V"], ["ツール", "T"], ["演奏", "P"], ["ヘルプ", "H"]];

export default function App() {
  return (
    <div className={`relative flex min-h-screen flex-col overflow-hidden bg-black ${JP}`}>
      <header className="flex h-[26px] shrink-0 items-center bg-[linear-gradient(180deg,#3b8cf5_0%,#0a5be8_12%,#0253df_40%,#0262fb_80%,#0243c4_100%)] pr-[2px] pl-[2px]">
        <svg width="16" height="16" aria-hidden="true"><rect width="16" height="16" rx="3" fill="#252a30" /><path d="M2 10l6-3 4-5 2 1-3 7-7 3z" fill="#b8641c" /><path d="M2 10l7-2 5-5" stroke="#f0a02c" strokeWidth="1.500" fill="none" /></svg>
        <h1 className="ml-1 flex items-baseline font-['Liberation_Mono','Noto_Sans_CJK_JP',monospace] text-[13px] leading-[18px] font-bold whitespace-pre text-white [text-shadow:1px_1px_1px_#0a2a80]">
          <span>Vocaloid-Alice - </span><span className="ml-1 text-[14px]">バンドプロデューサー</span><span className="ml-1">5 (</span><span className="text-[14px]">耳コピモード</span><span>)</span>
        </h1>
        <div className="ml-auto flex gap-[2px]">
          {["最小化", "元に戻す", "閉じる"].map((t, i) => (
            <button key={t} type="button" aria-label={t} className={`flex h-[21px] w-[21px] items-center justify-center rounded-[3px] border border-white ${i === 2 ? "bg-linear-to-br from-[#f08a68] to-[#d23a0c]" : "bg-linear-to-br from-[#6d94f0] to-[#1c4fd8]"}`}>
              <svg width="13" height="13" viewBox="0 0 13 13" aria-hidden="true">
                {i === 0 && <path d="M2 9h7v3H2z" fill="#fff" />}
                {i === 1 && <path d="M4.500 4V1.500h7v6H9M1.500 5.500h7v6h-7zM1.500 6h7M4.500 2h7" stroke="#fff" fill="none" strokeWidth="1.300" />}
                {i === 2 && <path d="M1.500 1.500l10 10M11.500 1.500l-10 10" stroke="#fff" strokeWidth="2.200" />}
              </svg>
            </button>
          ))}
        </div>
      </header>

      <nav className="flex h-[22px] shrink-0 items-start gap-3 border-b border-white bg-[#ece9d8] pl-[6px] text-[12px] leading-[20px] text-black shadow-[inset_0_-1px_0_#8f8c7c]">
        {MENUS.map(([t, k]) => (
          <a key={k} href={"#" + k} className="whitespace-nowrap">
            {t}<span className="font-['Liberation_Mono',monospace] text-[10px]">(<u>{k}</u>)</span>
          </a>
        ))}
      </nav>

      <Toolbar />

      <main className="flex shrink-0">
        <div className="flex min-w-0 flex-1 flex-col">
          <div className="flex h-[19px] shrink-0 items-end pl-[2px] leading-4 text-[#c8dce6]">
            <button type="button" className="h-[17px] w-[63px] rounded-tr-[4px] border border-b-0 border-[#8d8a7c] bg-[#15232e] text-[12px] whitespace-nowrap">コード検出</button>
            <button type="button" className="h-[17px] w-16 rounded-tr-[4px] border border-b-0 border-[#a8a498] bg-[#808080] text-[12px] whitespace-nowrap">コピー支援</button>
          </div>
          <div className="flex border-t-2 border-b-2 border-t-[#a8a498] border-b-[#f5f3e8]">
            <TrackLabels />
            <Timeline />
          </div>
        </div>
        <SidePanel />
      </main>

      <SubWindow />

      <footer className="flex h-[19px] shrink-0 items-center border-t-2 border-[#fdfcf5] bg-[#ece9d8] text-[12px] leading-4 whitespace-nowrap text-black">
        <span className="flex-1 pl-[3px]">ヘルプを表示するには <span className="font-['Liberation_Mono',monospace] text-[10px]">F1</span> キーを押してください。</span>
        <span className="h-4 w-[92px] border-l border-[#c5c2b0]" />
        <span className="h-4 w-[74px] border-l border-[#c5c2b0] pl-1">拍子<span className="font-['Liberation_Mono',monospace] text-[10px]">: 4/4</span></span>
        <span className="h-4 w-[74px] border-l border-[#c5c2b0] pl-1 font-['Liberation_Mono',monospace] text-[10px]">BPM: 80</span>
        <span className="h-4 w-[74px] border-l border-[#c5c2b0] pl-1">キー<span className="font-['Liberation_Mono',monospace] text-[10px]">: D</span></span>
        <span className="h-4 w-[166px] border-l border-[#c5c2b0] pl-1">ピッチのずれ<span className="font-['Liberation_Mono',monospace] text-[10px]">: 10</span>セント</span>
      </footer>
      <div className="h-[2px] shrink-0 bg-[#2a66d0]" />
      <ImeBar />
    </div>
  );
}
